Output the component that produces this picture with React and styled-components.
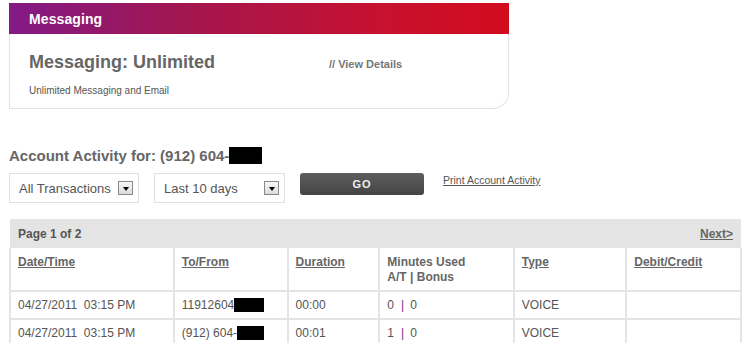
import React from "react";
import styled, { createGlobalStyle } from "styled-components";

const GlobalStyle = createGlobalStyle`
  body {
    margin: 0;
    background: #fff;
    font-family: "Liberation Sans", Arial, sans-serif;
    color: #555;
  }
`;

const Page = styled.div`
  padding: 3px 7px 0 9px;
`;

const Card = styled.section`
  width: 500px;
  border: 1px solid #e3e3e3;
  border-top: none;
  border-bottom-right-radius: 16px;
  box-sizing: border-box;
`;

const CardHead = styled.div`
  height: 31px;
  margin: 0 -1px;
  padding-left: 20px;
  display: flex;
  align-items: center;
  background: linear-gradient(to right, #821a87 0%, #a3164f 35%, #c7112e 75%, #d20b1f 100%);
  color: #fff;
  font-size: 14px;
  font-weight: bold;
  letter-spacing: 0.1px;
`;

const CardBody = styled.div`
  padding: 18px 19px 12px;
`;

const PlanRow = styled.div`
  display: flex;
  align-items: center;
`;

const PlanTitle = styled.h2`
  margin: 0;
  width: 300px;
  font-size: 18px;
  font-weight: bold;
  color: #666;
`;

const DetailsLink = styled.a`
  font-size: 11px;
  font-weight: bold;
  color: #777;
  text-decoration: none;
  margin-top: 3px;
`;

const PlanNote = styled.p`
  margin: 12px 0 0;
  font-size: 10px;
  color: #555;
`;

const ActivityTitle = styled.h3`
  margin: 36px 0 0;
  font-size: 15px;
  font-weight: bold;
  color: #666;
  display: flex;
  align-items: center;
  height: 20px;
`;

const Redact = styled.span`
  display: inline-block;
  width: ${(p) => p.w || 32}px;
  height: ${(p) => p.h || 16}px;
  background: #000;
  vertical-align: middle;
`;

const Controls = styled.div`
  display: flex;
  align-items: flex-start;
  margin-top: 8px;
  height: 30px;
`;

const SelectBox = styled.div`
  width: ${(p) => p.w}px;
  height: 30px;
  box-sizing: border-box;
  border: 1px solid #e0e0e0;
  margin-right: ${(p) => p.mr || 0}px;
  padding: 0 5px 0 9px;
  display: flex;
  align-items: center;
  justify-content: space-between;
  font-size: 13px;
  color: #555;
`;

const ArrowBtn = styled.span`
  width: 15px;
  height: 14px;
  box-sizing: border-box;
  border: 1px solid #888;
  background: linear-gradient(#f8f8f8, #dcdcdc);
  display: flex;
  align-items: center;
  justify-content: center;
  &::after {
    content: "";
    border-left: 3.5px solid transparent;
    border-right: 3.5px solid transparent;
    border-top: 4px solid #000;
    margin-top: 1px;
  }
`;

const GoButton = styled.button`
  width: 124px;
  height: 22px;
  margin-left: 15px;
  border: none;
  border-radius: 3px;
  background: linear-gradient(#5e5e5e, #444);
  color: #eee;
  font-family: inherit;
  font-size: 11px;
  font-weight: bold;
  letter-spacing: 1px;
  padding: 0;
`;

const PrintLink = styled.a`
  margin-left: 19px;
  margin-top: 1px;
  font-size: 10.5px;
  color: #555;
  text-decoration: underline;
`;

const Table = styled.table`
  margin-top: 16px;
  width: 733px;
  border-collapse: collapse;
  font-size: 12px;
  color: #555;
`;

const PagerCell = styled.td`
  background: #e4e4e4;
  height: 29px;
  padding: 0 8px;
  font-weight: bold;
  color: #555;
`;

const PagerInner = styled.div`
  display: flex;
  justify-content: space-between;
  align-items: center;
`;

const NextLink = styled.a`
  color: #666;
  text-decoration: underline;
  font-weight: bold;
`;

const Th = styled.th`
  width: ${(p) => p.w}px;
  height: 43px;
  box-sizing: border-box;
  text-align: left;
  vertical-align: top;
  padding: 7px 7px 0;
  border: 2px solid #e4e4e4;
  border-top: none;
  font-weight: bold;
  color: #666;
  line-height: 15px;
`;

const SortLink = styled.a`
  text-decoration: underline;
  color: #666;
`;

const Td = styled.td`
  height: 26px;
  padding: 0 7px;
  border: 2px solid #e4e4e4;
  white-space: nowrap;
`;

const Pipe = styled.span`
  color: #7a2f8e;
  margin: 0 6px 0 7px;
`;

const rows = [
  { date: "04/27/2011\u00a0\u00a003:15 PM", to: "11912604", w: 30, dur: "00:00", at: 0, bonus: 0, type: "VOICE" },
  { date: "04/27/2011\u00a0\u00a003:15 PM", to: "(912) 604-", w: 27, dur: "00:01", at: 1, bonus: 0, type: "VOICE" },
];

export default function App() {
  return (
    <Page>
      <GlobalStyle />
      <Card>
        <CardHead>Messaging</CardHead>
        <CardBody>
          <PlanRow>
            <PlanTitle>Messaging: Unlimited</PlanTitle>
            <DetailsLink href="#">// View Details</DetailsLink>
          </PlanRow>
          <PlanNote>Unlimited Messaging and Email</PlanNote>
        </CardBody>
      </Card>

      <ActivityTitle>
        Account Activity for: (912) 604-
        <Redact w={33} h={17} />
      </ActivityTitle>

      <Controls>
        <SelectBox w={130} mr={15}>
          All Transactions
          <ArrowBtn />
        </SelectBox>
        <SelectBox w={131}>
          Last 10 days
          <ArrowBtn />
        </SelectBox>
        <GoButton>GO</GoButton>
        <PrintLink href="#">Print Account Activity</PrintLink>
      </Controls>

      <Table>
        <tbody>
          <tr>
            <PagerCell colSpan={6}>
              <PagerInner>
                <span>Page 1 of 2</span>
                <NextLink href="#">Next&gt;</NextLink>
              </PagerInner>
            </PagerCell>
          </tr>
          <tr>
            <Th w={164}><SortLink href="#">Date/Time</SortLink></Th>
            <Th w={114}><SortLink href="#">To/From</SortLink></Th>
            <Th w={92}><SortLink href="#">Duration</SortLink></Th>
            <Th w={135}>Minutes Used<br />A/T | Bonus</Th>
            <Th w={113}><SortLink href="#">Type</SortLink></Th>
            <Th w={115}><SortLink href="#">Debit/Credit</SortLink></Th>
          </tr>
          {rows.map((r, i) => (
            <tr key={i}>
              <Td>{r.date}</Td>
              <Td>
                {r.to}
                <Redact w={r.w} h={14} />
              </Td>
              <Td>{r.dur}</Td>
              <Td>
                {r.at}
                <Pipe>|</Pipe>
                {r.bonus}
              </Td>
              <Td>{r.type}</Td>
              <Td />
            </tr>
          ))}
        </tbody>
      </Table>
    </Page>
  );
}
